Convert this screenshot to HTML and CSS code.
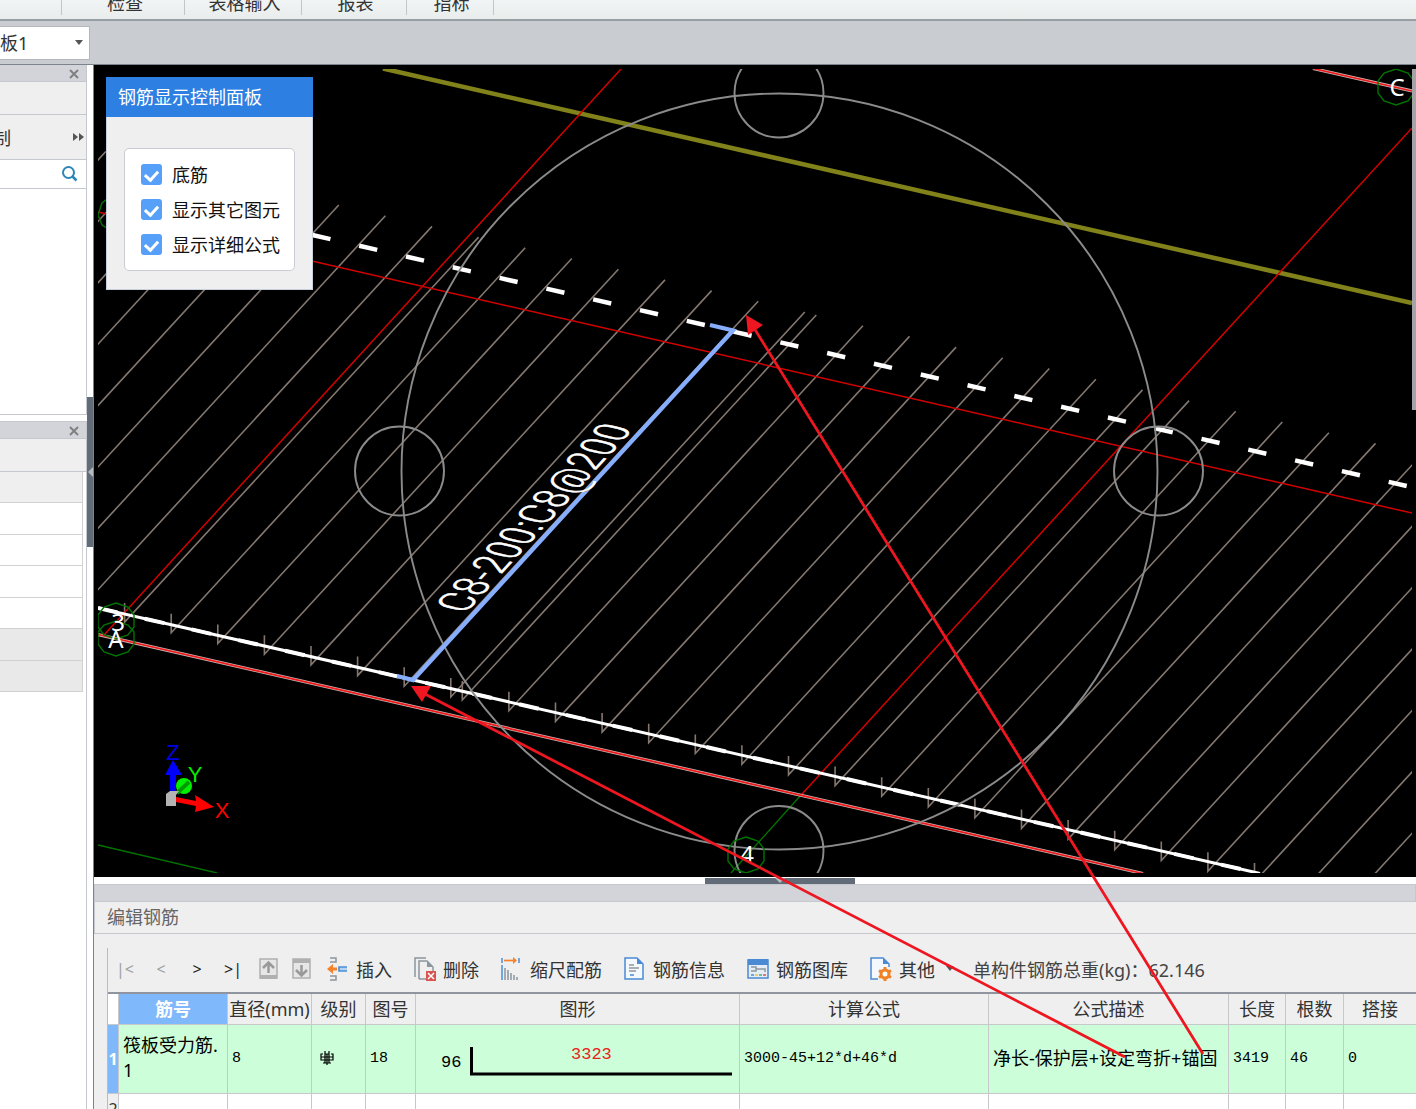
FILE: index.html
```html
<!DOCTYPE html>
<html lang="zh-CN">
<head>
    <meta charset="UTF-8">
    <title>编辑钢筋</title>
    <link rel="stylesheet" href="styles.css">
</head>
<body>
    <nav class="ribbon">
        <span class="group group-first"></span>
        <span class="group group-check">检查</span>
        <span class="group group-input">表格输入</span>
        <span class="group group-report">报表</span>
        <span class="group group-target">指标</span>
    </nav>

    <div class="selector-bar">
        <select class="component" aria-label="构件">
            <option>筏板1</option>
        </select>
        <svg class="caret" viewBox="0 0 10 6"><path d="M1 0h8L5 5z" fill="#555"/></svg>
    </div>

    <div class="workspace">
        <aside class="sidebar">
            <section class="dock dock-list">
                <div class="dock-head"><button class="close" aria-label="关闭"><svg viewBox="0 0 10 10"><path d="M1 1l8 8M9 1l-8 8"/></svg></button></div>
                <div class="dock-bar"></div>
                <div class="dock-tools">
                    <span>制</span>
                    <svg class="more" viewBox="0 0 12 8"><path d="M0 0l5 4-5 4zM6 0l5 4-5 4z" fill="#555"/></svg>
                </div>
                <div class="search">
                    <input type="text" aria-label="搜索">
                    <svg viewBox="0 0 16 16"><circle cx="6.5" cy="6.5" r="5.5"/><path d="M10.5 10.5l4 4" stroke-width="2.5"/></svg>
                </div>
            </section>
            <section class="dock dock-props">
                <div class="dock-head"><button class="close" aria-label="关闭"><svg viewBox="0 0 10 10"><path d="M1 1l8 8M9 1l-8 8"/></svg></button></div>
                <div class="dock-bar"></div>
                <div class="props">
                    <div class="prop shade"></div>
                    <div class="prop"></div>
                    <div class="prop"></div>
                    <div class="prop"></div>
                    <div class="prop"></div>
                    <div class="prop dim"></div>
                    <div class="prop dim"></div>
                </div>
            </section>
        </aside>
        <div class="gutter">
            <div class="grip-v"><svg viewBox="0 0 6 10"><path d="M6 0v10L1 5z" fill="#b4bac0"/></svg></div>
        </div>

        <main class="main">
            <div class="viewport">
                <svg class="scene" viewBox="94 65 1322 812" preserveAspectRatio="xMinYMin slice">
                    <defs>
                        <clipPath id="view"><rect x="98" y="69" width="1314" height="804"/></clipPath>
                    </defs>
                    <g clip-path="url(#view)" fill="none">
                        <!-- slab edge and axes -->
                        <path d="M383 68.500L1412 303" stroke="#82821a" stroke-width="4.500"/>
                        <path d="M98 845l119 28M801 795L731 873" stroke="#007400" stroke-width="1.300"/>

                        <!-- rebars, one hook and one bar each -->
                        <path class="rebar" d="M-248.200 517.500v19l354-385m-307.400 376.700v19l354-385m-307.400 376.700v19l354-385m-307.400 376.700v19l354-385m-307.400 376.700v19l354-385m-307.400 376.700v19l354-385m-307.400 376.700v19l354-385m-307.400 376.700v19l354-385m-307.400 376.700v19l354-385m-307.400 376.700v19l354-385m-307.400 376.700v19l354-385m-307.400 376.700v19l354-385m-307.400 376.700v19l354-385m-307.400 376.700v19l354-385m-307.400 376.700v19l354-385m-307.400 376.700v19l354-385"/>
                        <path class="rebar" d="M462.300 681v19l354-385m-307.400 376.700v19l354-385m-307.400 376.700v19l354-385m-307.400 376.700v19l354-385m-307.400 376.700v19l354-385m-307.400 376.700v19l354-385m-307.400 376.700v19l354-385m-307.400 376.700v19l354-385m-307.400 376.700v19l354-385m-307.400 376.700v19l354-385m-307.400 376.700v19l354-385m-307.400 376.700v19l354-385m-307.400 376.700v19l354-385m-307.400 376.700v19l354-385m-307.400 376.700v19l354-385m-307.400 376.700v19l354-385m-307.400 376.700v19l354-385m-307.400 376.700v19l354-385m-307.400 376.700v19l354-385m-307.400 376.700v19l354-385m-307.400 376.700v19l354-385"/>

                        <path d="M621 69L104 635M1412 128L802 794M98 212L1416 514" stroke="#d40000" stroke-width="1.500"/>
                        <path d="M98 634.500L1143 873.500M1313 68.500L1412 91" stroke="#c9b4b4" stroke-width="3.200"/>
                        <path d="M98 634.500L1143 873.500M1313 68.500L1412 91" stroke="#f01818" stroke-width="1.700"/>

                        <path d="M98 608L1260 873.500" stroke="#fff" stroke-width="3"/>
                        <path d="M98 608L1260 873.500" stroke="#fff" stroke-width="4" stroke-dasharray="20 28"/>
                        <path d="M312.400 235L1412 487.200" stroke="#fff" stroke-width="4.500" stroke-dasharray="18.500 29.510"/>

                        <!-- orbit ring -->
                        <g stroke="#8b8b8b" stroke-width="1.900">
                            <circle cx="779.500" cy="471.500" r="378"/>
                            <circle cx="779" cy="93" r="44.500"/>
                            <circle cx="779" cy="850.500" r="44.500"/>
                            <circle cx="399.500" cy="471" r="44.500"/>
                            <circle cx="1158.500" cy="471" r="44.500"/>
                        </g>

                        <path d="M710 325l23 5.500L413 680l-16-4" stroke="#86aefc" stroke-width="4.300"/>
                        <path d="M584 491q8-2 10-9" stroke="#7b5a1c" stroke-width="2"/>

                        <!-- axis marks -->
                        <g stroke="#007400" stroke-width="1.400">
                            <path d="M116 603l12 4 6 8v12l-6 8-12 4-12-4-6-8v-12l6-8zM116 621l12 4 6 7v12l-6 8-12 4-12-4-6-8v-12l6-7z"/>
                            <path d="M746 837l12 4 6 8v12l-6 8-12 4-12-4-6-8v-12l6-8zM1396 69l12 4 6 8v12l-6 8-12 4-12-4-6-8v-12l6-8zM110 197l-8 6-4 12 4 10 8 5"/>
                        </g>
                    </g>
                    <g class="axis-name">
                        <text x="118" y="631">3</text>
                        <text x="116" y="648">A</text>
                        <text x="747" y="863">4</text>
                        <text x="1397" y="96">C</text>
                    </g>
                    <text class="bar-name" transform="translate(465 614) rotate(-47.700) skewX(29)">C8-200:C8@200</text>

                    <!-- coordinate triad -->
                    <circle cx="184" cy="786" r="8" fill="#00f000"/>
                    <path d="M177 793l12-11" stroke="#009a00" stroke-width="4"/>
                    <path d="M176 797l20 4-1-6 19 12-19 5 1-6-20-4z" fill="#f00"/>
                    <path d="M170 795v-20h-5l8-15 9 15h-6v20z" fill="#00f"/>
                    <path d="M166 794l4-3h9l-3 4v11h-10z" fill="#b4b4b4"/>
                    <g class="triad">
                        <text x="173" y="760" fill="#0000e6">Z</text>
                        <text x="195" y="782" fill="#00f000">Y</text>
                        <text x="222" y="818" fill="#f00">X</text>
                    </g>
                    <path d="M1412 69h4v341h-4z" fill="#a3a3a8"/>
                </svg>

                <form class="control-panel">
                    <h2>钢筋显示控制面板</h2>
                    <div class="options">
                        <label><input type="checkbox" checked>底筋</label>
                        <label><input type="checkbox" checked>显示其它图元</label>
                        <label><input type="checkbox" checked>显示详细公式</label>
                    </div>
                </form>
            </div>

            <div class="splitter">
                <div class="grip-h"><svg viewBox="0 0 10 6"><path d="M0 0h10L5 5z" fill="#b4bac0"/></svg></div>
            </div>

            <section class="editor">
                <div class="editor-head"></div>
                <h1>编辑钢筋</h1>
                <div class="sheet">
                    <div class="toolbar">
                        <button class="nav" disabled>|&lt;</button>
                        <button class="nav" disabled>&lt;</button>
                        <button class="nav">&gt;</button>
                        <button class="nav">&gt;|</button>
                        <button class="move" aria-label="上移"><svg viewBox="0 0 20 22"><path d="M1 1h17v19H1z" fill="#e6e6e6" stroke="#b0b0b0" stroke-width="1.500"/><path d="M1 17h17v4H1z" fill="#b0b0b0"/><path d="M9.500 15V5M4 10l5.500-5.500L15 10" fill="none" stroke="#999" stroke-width="2.500"/></svg></button>
                        <button class="move" aria-label="下移"><svg viewBox="0 0 20 22"><path d="M1 1h17v19H1z" fill="#e6e6e6" stroke="#b0b0b0" stroke-width="1.500"/><path d="M1 1h17v4H1z" fill="#b0b0b0"/><path d="M9.500 7v10M4 12l5.500 5.500L15 12" fill="none" stroke="#999" stroke-width="2.500"/></svg></button>
                        <button class="tool tool-first">
                            <svg viewBox="0 0 22 24"><path d="M3 1h6v4H3M3 23h6v-4H3" fill="none" stroke="#8c969e" stroke-width="1.500"/><path d="M0 12l6-5v3.500h4v3H6V17z" fill="#f5822a"/><path d="M20 10h-8v4h8" fill="#b9d3ee" stroke="#4a90d9" stroke-width="1.700"/></svg>插入
                        </button>
                        <button class="tool">
                            <svg viewBox="0 0 22 24"><path d="M1 20V1h11M5 22V4h8l6 6v5M12 22H5" fill="none" stroke="#8c969e" stroke-width="1.500"/><path d="M13 4v6h6z" fill="#8c969e"/><path d="M12 14h10v10H12z" fill="#d9534f"/><path d="M14 16l6 6M20 16l-6 6" stroke="#fff" stroke-width="1.500"/></svg>删除
                        </button>
                        <button class="tool">
                            <svg viewBox="0 0 22 24"><path d="M1 1v5M18 1v5M1 8v15" stroke="#4a90d9" stroke-width="1.500"/><path d="M3 3.500h10" stroke="#f5822a" stroke-width="1.700"/><path d="M12 0l4 3.500-4 3.500z" fill="#f5822a"/><path d="M4 11v12M7 13v10M10 16v7M13 18v5M16 20v3" stroke="#8c969e" stroke-width="1.500"/></svg>缩尺配筋
                        </button>
                        <button class="tool">
                            <svg viewBox="0 0 22 24"><path d="M1 1h12l6 6v15H1z" fill="#f4f8fc" stroke="#4a8ad4" stroke-width="1.500"/><path d="M13 1v6h6z" fill="#4a8ad4"/><path d="M5 8h5M5 11h10M5 14h7" stroke="#8c969e" stroke-width="1.500"/><path d="M6 18h4" stroke="#4a8ad4" stroke-width="1.500"/></svg>钢筋信息
                        </button>
                        <button class="tool">
                            <svg viewBox="0 0 22 24"><path d="M1 3h20v18H1z" fill="#e4edf6" stroke="#4a8ad4" stroke-width="1.500"/><path d="M1 2h20v6H1z" fill="#4a8ad4"/><path d="M4 10h5v4H4M9 12h9v3" fill="none" stroke="#8c969e" stroke-width="1.500"/><path d="M4 18h3" stroke="#4a8ad4" stroke-width="1.500"/><path d="M8 18h3" stroke="#f2c12e" stroke-width="1.500"/><path d="M12 18h3" stroke="#4cae6e" stroke-width="1.500"/><path d="M16 18h3" stroke="#e0524d" stroke-width="1.500"/></svg>钢筋图库
                        </button>
                        <button class="tool">
                            <svg viewBox="0 0 22 24"><path d="M8 22H1V1h12l6 6v3" fill="#f4f8fc" stroke="#4a8ad4" stroke-width="1.500"/><path d="M13 1v6h6z" fill="#4a8ad4"/><circle cx="15" cy="17" r="4" fill="#fff" stroke="#f08228" stroke-width="3"/><path d="M15 10v3M15 21v3M9 13.500l2.500 1.500M18.500 19l2.500 1.500M9 20.500l2.500-1.500M18.500 15l2.500-1.500" stroke="#f08228" stroke-width="3"/></svg>其他
                            <svg class="drop" viewBox="0 0 10 6"><path d="M1 0h8L5 5z" fill="#555"/></svg>
                        </button>
                        <span class="weight">单构件钢筋总重(kg)：62.146</span>
                    </div>
                    <table class="grid">
                        <colgroup>
                            <col class="c-row"><col class="c-name"><col class="c-dia"><col class="c-grade"><col class="c-fig"><col class="c-shape"><col class="c-formula"><col class="c-desc"><col class="c-len"><col class="c-count"><col class="c-lap">
                        </colgroup>
                        <thead>
                            <tr>
                                <th class="corner"></th>
                                <th class="current">筋号</th>
                                <th>直径(mm)</th>
                                <th>级别</th>
                                <th>图号</th>
                                <th>图形</th>
                                <th>计算公式</th>
                                <th>公式描述</th>
                                <th>长度</th>
                                <th>根数</th>
                                <th>搭接</th>
                            </tr>
                        </thead>
                        <tbody>
                            <tr class="selected">
                                <th>1</th>
                                <td class="name">筏板受力筋.1</td>
                                <td>8</td>
                                <td><svg class="grade" viewBox="0 0 16 14"><path d="M4 3H2v6h12V3h-2M6 0v12M10 0v12M2 6h12M4 12h8M8 3v11M6 3h4"/></svg></td>
                                <td>18</td>
                                <td class="shape"><svg viewBox="0 0 322 66"><text x="25" y="41">96</text><text class="red" x="155" y="33">3323</text><path d="M55.500 21v27H316" fill="none" stroke="#000" stroke-width="3"/></svg></td>
                                <td>3000-45+12*d+46*d</td>
                                <td class="desc">净长-保护层+设定弯折+锚固</td>
                                <td>3419</td>
                                <td>46</td>
                                <td>0</td>
                            </tr>
                            <tr class="next">
                                <th>2</th>
                                <td></td><td></td><td></td><td></td><td></td><td></td><td></td><td></td><td></td><td></td>
                            </tr>
                        </tbody>
                    </table>
                </div>
            </section>
        </main>
    </div>

    <!-- arrows from the formula to both bar ends -->
    <svg class="callouts" width="1416" height="1109" viewBox="0 0 1416 1109">
        <path d="M1125 1057L425 694M1203 1054L754 328" stroke="#ee1620" stroke-width="2.800"/>
        <path d="M411 686h20l-9 16zM746 315l17 10-15 10z" fill="#ee1620"/>
    </svg>
</body>
</html>
```
FILE: styles.css
```css
* {
    box-sizing: border-box;
}

body {
    display: flex;
    flex-direction: column;
    height: 100vh;
    margin: 0;
    overflow: hidden;
    background-color: #fff;
    color: #333;
    font-family: "Noto Sans", "Noto Sans CJK SC", sans-serif;
    font-size: 18px;
}

button {
    padding: 0;
    border: none;
    background: none;
    color: inherit;
    font: inherit;
}

svg {
    display: block;
}

/* ribbon */
.ribbon {
    display: flex;
    flex: none;
    align-items: flex-end;
    height: 21px;
    border-bottom: 2px solid #98a0a6;
    background: linear-gradient(#f1f4f4, #e8edec);
    overflow: hidden;
}

.group {
    height: 19px;
    margin-bottom: 4px;
    border-right: 1px solid #c2c6c8;
    line-height: 14px;
    text-align: center;
}

.group-first {
    width: 62px;
}

.group-check {
    width: 123px;
    padding-left: 4px;
}

.group-input {
    width: 117px;
    padding-left: 3px;
}

.group-report {
    width: 105px;
    padding-left: 3px;
}

.group-target {
    width: 87px;
    padding-left: 3px;
}

.selector-bar {
    display: flex;
    flex: none;
    align-items: center;
    height: 44px;
    border-bottom: 1px solid #7d838c;
    background-color: #c9ccd1;
}

.component {
    width: 126px;
    height: 34px;
    margin-left: -36px;
    padding: 0 0 0 17px;
    appearance: none;
    border: 1px solid #b4b7bb;
    border-radius: 0;
    background-color: #fff;
    color: #333;
    font: inherit;
}

.caret {
    width: 10px;
    height: 6px;
    margin-left: -16px;
}

.workspace {
    display: flex;
    flex: 1;
    min-height: 0;
}

/* docked panels on the left */
.sidebar {
    display: flex;
    flex: none;
    flex-direction: column;
    width: 87px;
}

.dock {
    border-right: 1px solid #c5c9cf;
    border-bottom: 1px solid #c5c9cf;
}

.dock-list {
    height: 350px;
}

.dock-props {
    flex: 1;
    margin-top: 6px;
    border-bottom: none;
}

.dock-head {
    display: flex;
    align-items: center;
    justify-content: flex-end;
    height: 17px;
    padding: 1px 7px 0 0;
    border-bottom: 1px solid #c5c9cf;
    background-color: #d3d4da;
}

.dock-props .dock-head {
    height: 18px;
    border-top: 1px solid #c5c9cf;
}

.close svg {
    width: 10px;
    height: 10px;
    fill: none;
    stroke: #808080;
    stroke-width: 2;
}

.dock-bar {
    height: 33px;
    border-bottom: 1px solid #c5c9cf;
    background-color: #efefef;
}

.dock-tools {
    display: flex;
    align-items: center;
    justify-content: space-between;
    height: 45px;
    padding-right: 1px;
    border-bottom: 1px solid #c5c9cf;
    background-color: #efefef;
}

.dock-tools span {
    margin-left: -7px;
}

.more {
    width: 12px;
    height: 8px;
}

.search {
    display: flex;
    align-items: center;
    height: 29px;
    padding-right: 8px;
    border-bottom: 1px solid #c5c9cf;
}

.search input {
    flex: 1;
    width: 0;
    border: none;
    outline: none;
}

.search svg {
    width: 16px;
    height: 16px;
    fill: none;
    stroke: #2e86b8;
    stroke-width: 2;
}

.props {
    margin-right: 3px;
    border-right: 1px solid #d2d2d2;
}

.prop {
    height: 31px;
    border-bottom: 1px solid #d2d2d2;
}

.prop:nth-child(even) {
    height: 32px;
}

.shade {
    background-color: #efefef;
}

.dim {
    background-color: #e9e9e9;
}

.gutter {
    flex: none;
    width: 7px;
    padding-top: 332px;
    border-right: 1px solid #7d838c;
}

.grip-v {
    display: flex;
    align-items: center;
    height: 150px;
    background-color: #616c78;
}

.grip-v svg {
    width: 6px;
    height: 10px;
}

/* model view */
.main {
    display: flex;
    flex: 1;
    flex-direction: column;
    min-width: 0;
}

.viewport {
    position: relative;
    flex: 1;
    min-height: 0;
    overflow: hidden;
    background-color: #000;
}

.scene {
    width: 100%;
    height: 100%;
}

.rebar {
    stroke: #83776f;
    stroke-width: 1.6px;
}

.axis-name {
    fill: #fff;
    font-size: 24px;
    text-anchor: middle;
}

.bar-name {
    fill: #fff;
    stroke: #fff;
    stroke-width: 0.5px;
    font-family: "Liberation Sans Narrow", "Roboto Condensed", Roboto, sans-serif;
    font-size: 40px;
    font-weight: 300;
}

.triad {
    font-family: "Liberation Sans", sans-serif;
    font-size: 22px;
    text-anchor: middle;
}

.control-panel {
    position: absolute;
    top: 12px;
    left: 12px;
    width: 207px;
    height: 213px;
    border: 1px solid #c8d0dd;
    border-top: none;
    background-color: #efefef;
}

.control-panel h2 {
    margin: 0 -1px 31px;
    padding-left: 12px;
    background-color: #2d80e2;
    color: #fff;
    font-size: 18px;
    font-weight: 400;
    line-height: 40px;
}

.options {
    display: flex;
    flex-direction: column;
    gap: 2px;
    height: 123px;
    margin: 0 17px;
    padding: 9px 16px;
    border: 1px solid #c9cdd3;
    border-radius: 5px;
    background-color: #fff;
}

.options label {
    display: flex;
    align-items: center;
    gap: 10px;
    height: 33px;
    color: #111;
    line-height: 30px;
    white-space: nowrap;
}

.options input {
    display: flex;
    flex: none;
    justify-content: center;
    width: 21px;
    height: 21px;
    margin: 0;
    appearance: none;
    border-radius: 3px;
    background-color: #56a0fa;
}

.options input:checked::after {
    content: "";
    width: 6px;
    height: 10px;
    margin-top: 4px;
    border: solid #fff;
    border-width: 0 3px 3px 0;
    transform: rotate(42deg);
}

.splitter {
    display: flex;
    flex: none;
    justify-content: center;
    height: 7px;
    padding: 1px 0 0 50px;
    background-color: #fff;
}

.grip-h {
    width: 150px;
    background-color: #616c78;
}

.splitter {
    padding: 1px 0 0;
    justify-content: flex-start;
}

.splitter .grip-h {
    margin-left: calc(50% - 50px);
}

.grip-h svg {
    width: 10px;
    height: 6px;
    margin: 0 auto;
}

/* rebar editor */
.editor {
    flex: none;
    height: 225px;
    overflow: hidden;
    background-color: #efefef;
}

.editor-head {
    height: 18px;
    border: 1px solid #c5c9cf;
    background-color: #d3d4da;
}

.editor h1 {
    margin: 0;
    padding-left: 12px;
    border-bottom: 1px solid #c5c9cf;
    border-left: 1px solid #c5c9cf;
    color: #666;
    font-size: 18px;
    font-weight: 400;
    line-height: 31px;
}

.sheet {
    margin: 14px 0 0 13px;
    border-left: 1px solid #b9bcc1;
}

.toolbar {
    display: flex;
    align-items: center;
    height: 44px;
    padding-bottom: 2px;
    white-space: nowrap;
}

.nav {
    width: 36px;
    margin-left: -1px;
    margin-right: 1px;
    color: #222;
    font-family: "Noto Sans", sans-serif;
    font-size: 16px;
}

.nav:disabled {
    color: #a0a0a0;
}

.move {
    display: flex;
    justify-content: center;
    width: 33px;
}

.move svg {
    width: 20px;
    height: 22px;
}

.tool {
    display: flex;
    align-items: center;
    gap: 7px;
    margin-right: 22px;
}

.tool-first {
    margin-left: 9px;
}

.tool svg {
    width: 22px;
    height: 24px;
}

.tool .drop {
    width: 10px;
    height: 6px;
    margin: 0 -4px 0 3px;
}

.weight {
    color: #444;
}

.grid {
    width: 100%;
    min-width: 1309px;
    border-top: 2px solid #8f949e;
    border-collapse: separate;
    border-spacing: 0;
    table-layout: fixed;
}

.c-row { width: 11px; }
.c-name { width: 109px; }
.c-dia { width: 84px; }
.c-grade { width: 54px; }
.c-fig { width: 50px; }
.c-shape { width: 324px; }
.c-formula { width: 249px; }
.c-desc { width: 240px; }
.c-len { width: 57px; }
.c-count { width: 58px; }

.grid th,
.grid td {
    padding: 0;
    border-right: 1px solid #c6c8cb;
    border-bottom: 1px solid #c6c8cb;
    white-space: nowrap;
}

.grid thead th {
    height: 31px;
    font-weight: 400;
    line-height: 28px;
}

.grid .corner {
    background-color: #fff;
}

.grid .current {
    background-color: #7fb8fb;
    color: #fff;
    font-weight: 700;
}

.grid td {
    padding: 0 0 2px 4px;
    background-color: #fff;
    color: #000;
    font-family: "Liberation Mono", monospace;
    font-size: 15px;
}

.grid .selected td {
    height: 69px;
    background-color: #ccffd9;
}

.grid .selected th {
    background-color: #7fb8fb;
    color: #fff;
    font-size: 16px;
}

.grid .name {
    font-family: "Noto Sans", "Noto Sans CJK SC", sans-serif;
    font-size: 18px;
    line-height: 25px;
    white-space: normal;
    word-break: break-all;
}

.grid .desc {
    padding-bottom: 4px;
    font-family: "Noto Sans", "Noto Sans CJK SC", sans-serif;
    font-size: 18px;
}

.grade {
    width: 16px;
    height: 14px;
    margin-left: 3px;
    fill: none;
    stroke: #000;
    stroke-width: 1.2px;
}

.grid .selected .shape {
    padding: 0;
}

.shape svg {
    width: 322px;
    height: 66px;
}

.shape text {
    font-size: 17px;
}

.shape .red {
    fill: #e8231c;
}

.grid .next th {
    height: 30px;
    font-size: 16px;
    font-weight: 400;
}

.callouts {
    position: absolute;
    top: 0;
    left: 0;
    pointer-events: none;
}
```
